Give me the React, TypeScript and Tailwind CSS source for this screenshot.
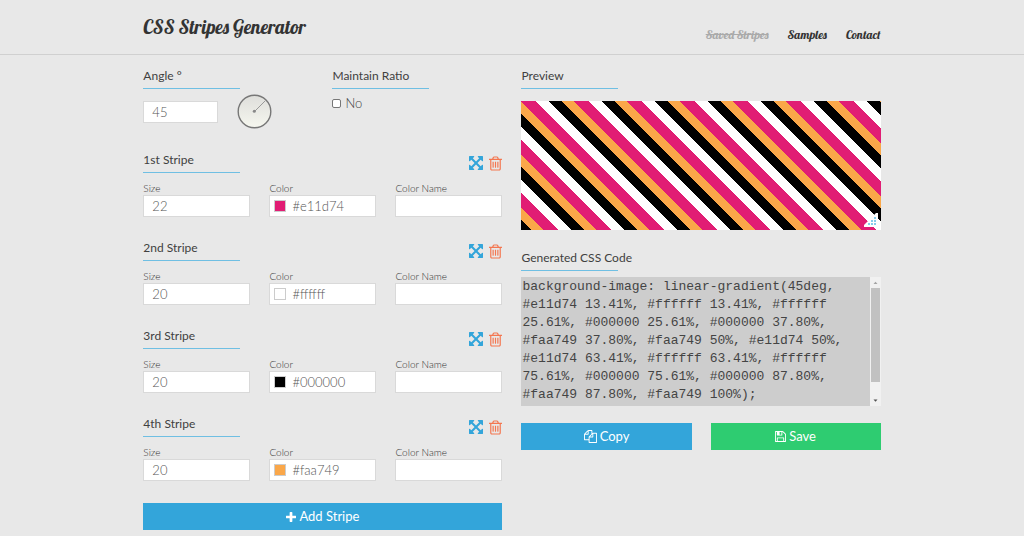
import { useId, useState } from "react";
import type { ReactNode } from "react";

const PATHS = {
  arrows:
    "M1411 541l-355 355 355 355 144-144q29-31 70-14 39 17 39 59v448q0 26-19 45t-45 19h-448q-42 0-59-40-17-39 14-69l144-144-355-355-355 355 144 144q31 30 14 69-17 40-59 40h-448q-26 0-45-19t-19-45v-448q0-42 40-59 39-17 69 14l144 144 355-355-355-355-144 144q-19 19-45 19-12 0-24-5-40-17-40-59v-448q0-26 19-45t45-19h448q42 0 59 40 17 39-14 69l-144 144 355 355 355-355-144-144q-31-30-14-69 17-40 59-40h448q26 0 45 19t19 45v448q0 42-39 59-13 5-25 5-26 0-45-19z",
  trash:
    "M704 736v576q0 14-9 23t-23 9h-64q-14 0-23-9t-9-23v-576q0-14 9-23t23-9h64q14 0 23 9t9 23zm256 0v576q0 14-9 23t-23 9h-64q-14 0-23-9t-9-23v-576q0-14 9-23t23-9h64q14 0 23 9t9 23zm256 0v576q0 14-9 23t-23 9h-64q-14 0-23-9t-9-23v-576q0-14 9-23t23-9h64q14 0 23 9t9 23zm128 724v-948h-896v948q0 22 7 40.5t14.5 27 10.5 8.5h832q3 0 10.5-8.5t14.5-27 7-40.5zm-672-1076h448l-48-117q-7-9-17-11h-317q-10 2-17 11zm928 32v64q0 14-9 23t-23 9h-96v948q0 83-47 143.5t-113 60.5h-832q-66 0-113-58.5t-47-141.5v-952h-96q-14 0-23-9t-9-23v-64q0-14 9-23t23-9h309l70-167q15-37 54-63t79-26h320q40 0 79 26t54 63l70 167h309q14 0 23 9t9 23z",
  files:
    "M1696 384q40 0 68 28t28 68v1216q0 40-28 68t-68 28h-960q-40 0-68-28t-28-68v-288h-544q-40 0-68-28t-28-68v-672q0-40 20-88t48-76l408-408q28-28 76-48t88-20h416q40 0 68 28t28 68v328q68-40 128-40h416zm-544 213l-299 299h299v-299zm-640-384l-299 299h299v-299zm196 647l316-316v-416h-384v416q0 40-28 68t-68 28h-416v640h512v-256q0-40 20-88t48-76zm956 804v-1152h-384v416q0 40-28 68t-68 28h-416v640h896z",
  floppy:
    "M512 1536h768v-384h-768v384zm896 0h128v-896q0-14-10-38.5t-20-34.5l-281-281q-10-10-34-20t-39-10v416q0 40-28 68t-68 28h-576q-40 0-68-28t-28-68v-416h-128v1280h128v-416q0-40 28-68t68-28h832q40 0 68 28t28 68v416zm-384-928v-320q0-13-9.5-22.5t-22.5-9.5h-192q-13 0-22.5 9.5t-9.5 22.5v320q0 13 9.5 22.5t22.5 9.5h192q13 0 22.5-9.5t9.5-22.5zm640 32v928q0 40-28 68t-68 28h-1344q-40 0-68-28t-28-68v-1344q0-40 28-68t68-28h928q40 0 88 20t76 48l280 280q28 28 48 76t20 88z",
  plus: "M1600 736v192q0 40-28 68t-68 28h-416v416q0 40-28 68t-68 28h-192q-40 0-68-28t-28-68v-416h-416q-40 0-68-28t-28-68v-192q0-40 28-68t68-28h416v-416q0-40 28-68t68-28h192q40 0 68 28t28 68v416h416q40 0 68 28t28 68z",
};

function Icon({ name, box, className }: { name: keyof typeof PATHS; box: string; className: string }) {
  return (
    <svg viewBox={box} className={className} fill="currentColor" aria-hidden="true">
      <path d={PATHS[name]} />
    </svg>
  );
}

function Heading({ children }: { children: ReactNode }) {
  return (
    <h2 className="w-[97px] whitespace-nowrap border-b border-[#6fbfe3] pb-[3px] text-xs leading-[18px] text-[#404040]">
      {children}
    </h2>
  );
}

const fieldClass =
  "block h-[22px] w-full min-w-0 border border-[#d9d9d9] bg-white px-2 text-[13px] font-light text-[#555] outline-none";

function Field({ label, value, swatch }: { label: string; value: string; swatch?: string }) {
  const id = useId();
  return (
    <div className="min-w-0">
      <label htmlFor={id} className="block text-[10px] font-light leading-[14px] text-[#333]">
        {label}
      </label>
      {swatch ? (
        <div className="flex h-[22px] items-center border border-[#d9d9d9] bg-white pl-1">
          <span className="size-3 shrink-0 border border-[#ccc]" style={{ backgroundColor: swatch }} />
          <input
            id={id}
            defaultValue={value}
            className="h-full w-full min-w-0 bg-transparent pl-[6px] text-[13px] font-light text-[#555] outline-none"
          />
        </div>
      ) : (
        <input id={id} defaultValue={value} className={fieldClass} />
      )}
    </div>
  );
}

function Stripe({ title, size, color }: { title: string; size: string; color: string }) {
  return (
    <section>
      <div className="flex items-center justify-between">
        <Heading>{title}</Heading>
        <div className="flex items-center gap-[6px] pt-[2px]">
          <button type="button" aria-label="Move" className="text-[#33a5da]">
            <Icon name="arrows" box="128 128 1536 1536" className="size-[14px]" />
          </button>
          <button type="button" aria-label="Delete" className="text-[#f4764f]">
            <Icon name="trash" box="192 128 1408 1536" className="h-[15px] w-[13px]" />
          </button>
        </div>
      </div>
      <div className="mt-2 grid grid-cols-3 gap-[19px]">
        <Field label="Size" value={size} />
        <Field label="Color" value={color} swatch={color} />
        <Field label="Color Name" value="" />
      </div>
    </section>
  );
}

const stripes = [
  { title: "1st Stripe", size: "22", color: "#e11d74" },
  { title: "2nd Stripe", size: "20", color: "#ffffff" },
  { title: "3rd Stripe", size: "20", color: "#000000" },
  { title: "4th Stripe", size: "20", color: "#faa749" },
];

const css =
  "background-image: linear-gradient(45deg, #e11d74 13.41%, #ffffff 13.41%, #ffffff 25.61%, #000000 25.61%, #000000 37.80%, #faa749 37.80%, #faa749 50%, #e11d74 50%, #e11d74 63.41%, #ffffff 63.41%, #ffffff 75.61%, #000000 75.61%, #000000 87.80%, #faa749 87.80%, #faa749 100%);";

const buttonClass = "flex h-[27px] items-center justify-center gap-[3px] text-[13px] text-white";
const scriptFont = "font-[Lobster,'Lobster_Two','Liberation_Serif',serif]";

export default function App() {
  const [ratio, setRatio] = useState(false);
  return (
    <div className="min-h-screen bg-[#e8e8e8] font-['Lato',sans-serif] text-[#4d4d4d]">
      <header className="border-b border-[#d0d0d0]">
        <div className={`mx-auto flex h-[54px] w-[72%] items-center justify-between text-[#333] ${scriptFont}`}>
          <h1 className="whitespace-nowrap text-[19px]">CSS Stripes Generator</h1>
          <nav className="flex gap-[19px] whitespace-nowrap pt-4 text-xs">
            <a href="#saved" className="text-[#aaa] line-through">
              Saved Stripes
            </a>
            <a href="#samples">Samples</a>
            <a href="#contact">Contact</a>
          </nav>
        </div>
      </header>

      <main className="mx-auto grid w-[72%] grid-cols-2 gap-[19px] pt-3">
        <div className="flex min-w-0 flex-col gap-[22px]">
          <div className="grid grid-cols-2 gap-[19px]">
            <section>
              <Heading>Angle °</Heading>
              <div className="mt-[5px] flex items-center gap-[19px]">
                <div className="w-[75px]">
                  <input aria-label="Angle" defaultValue="45" className={fieldClass} />
                </div>
                <svg viewBox="0 0 35 35" className="size-[35px]" role="img" aria-label="Angle dial">
                  <defs>
                    <linearGradient id="dial" x1="0" y1="0" x2="0" y2="1">
                      <stop offset="0" stopColor="#dededb" />
                      <stop offset="1" stopColor="#f6f7ef" />
                    </linearGradient>
                  </defs>
                  <circle cx="17.5" cy="17.5" r="16.3" fill="url(#dial)" stroke="#777" strokeWidth="1.4" />
                  <path d="M17.5 17.5L28.5 6.5" stroke="#999" strokeWidth="1" />
                  <circle cx="17.3" cy="17.3" r="1.5" fill="#888" />
                </svg>
              </div>
            </section>
            <section>
              <Heading>Maintain Ratio</Heading>
              <label className="mt-[5px] flex items-center gap-1 text-[13px] font-light leading-[18px] text-[#444]">
                <input
                  type="checkbox"
                  checked={ratio}
                  onChange={(e) => setRatio(e.target.checked)}
                  className="size-[9px] appearance-none rounded-[2px] border border-[#767676] bg-white checked:bg-[#33a5da]"
                />
                {ratio ? "Yes" : "No"}
              </label>
            </section>
          </div>

          {stripes.map((s) => (
            <Stripe key={s.title} {...s} />
          ))}

          <button type="button" className={`${buttonClass} bg-[#33a5da]`}>
            <Icon name="plus" box="192 128 1408 1408" className="size-[10px]" />
            Add Stripe
          </button>
        </div>

        <div className="min-w-0">
          <Heading>Preview</Heading>
          <div className="relative mt-3 h-[129px] bg-[linear-gradient(45deg,#e11d74_13.41%,#ffffff_13.41%,#ffffff_25.61%,#000000_25.61%,#000000_37.80%,#faa749_37.80%,#faa749_50%,#e11d74_50%,#e11d74_63.41%,#ffffff_63.41%,#ffffff_75.61%,#000000_75.61%,#000000_87.80%,#faa749_87.80%,#faa749_100%)] bg-[length:53px_53px]">
            <svg viewBox="0 0 15 15" className="absolute bottom-[2px] right-[2px] size-[15px]" aria-hidden="true">
              <path d="M0 14V12L12 0H14V14Z" fill="#fff" />
              <g fill="#86cdec">
                <path d="M10 4h2v2h-2zM7 7h2v2h-2zM10 7h2v2h-2zM4 10h2v2h-2zM7 10h2v2h-2zM10 10h2v2h-2z" />
              </g>
            </svg>
          </div>

          <div className="mt-[19px]">
            <Heading>Generated CSS Code</Heading>
          </div>
          <div className="mt-[6px] flex h-[129px]">
            <textarea
              aria-label="Generated CSS Code"
              readOnly
              value={css}
              className="block h-full min-w-0 flex-1 resize-none overflow-hidden bg-[#cdcdcd] px-px py-[1px] font-['Liberation_Mono',monospace] text-[13px] leading-[18px] text-[#444] outline-none"
            />
            <div className="flex w-[11px] flex-col items-center bg-[#f1f1f1]" aria-hidden="true">
              <svg viewBox="0 0 11 11" className="size-[11px] shrink-0">
                <path d="M3.5 7L5.5 4.7L7.5 7Z" fill="#a3a3a3" />
              </svg>
              <div className="h-[94px] w-[9px] bg-[#c1c1c1]" />
              <svg viewBox="0 0 11 11" className="mt-auto size-[11px] shrink-0">
                <path d="M3.5 4.5L5.5 6.8L7.5 4.5Z" fill="#505050" />
              </svg>
            </div>
          </div>

          <div className="mt-[17px] grid grid-cols-2 gap-[19px]">
            <button type="button" className={`${buttonClass} bg-[#33a5da]`}>
              <Icon name="files" box="0 0 1792 1792" className="size-[13px]" />
              Copy
            </button>
            <button type="button" className={`${buttonClass} bg-[#2ecc71]`}>
              <Icon name="floppy" box="128 128 1536 1536" className="size-[11px]" />
              Save
            </button>
          </div>
        </div>
      </main>
    </div>
  );
}
